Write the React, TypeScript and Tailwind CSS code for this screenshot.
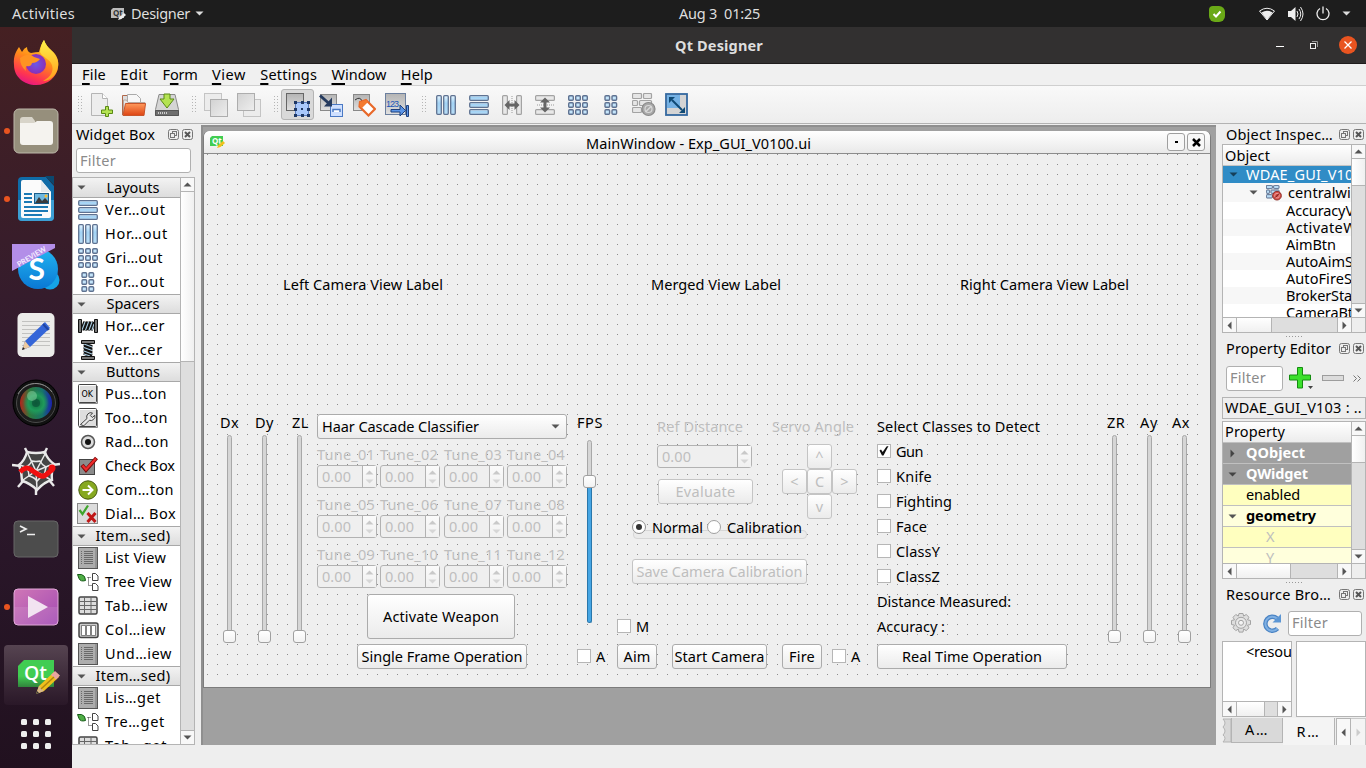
import React, { useLayoutEffect, useRef } from 'react';

/* Label that spreads its letters over a fixed advance width. */
function T({ w, children, className = '' }: { w?: number; children: React.ReactNode; className?: string }) {
  const ref = useRef<HTMLSpanElement>(null);
  useLayoutEffect(() => {
    const el = ref.current;
    if (!el || !w) return;
    el.style.letterSpacing = '0px';
    const n = (el.textContent || '').length || 1;
    el.style.letterSpacing = (w - el.getBoundingClientRect().width) / n + 'px';
  }, [w, children]);
  return <span ref={ref} className={'inline-block shrink-0 whitespace-pre pb-[2px] leading-[16px] ' + className}>{children}</span>;
}

/* ---------- small shared icons ---------- */
const Tri = ({ d = 'down', c = '#555' }: { d?: string; c?: string }) => (
  <svg width="9" height="9" viewBox="0 0 9 9" className="shrink-0">
    <path fill={c} d={d === 'down' ? 'M0.5 2.5h8l-4 4z' : d === 'up' ? 'M0.5 6.5h8l-4-4z' : d === 'left' ? 'M6.5 0.5v8l-4-4z' : 'M2.5 0.5v8l4-4z'} />
  </svg>
);

const DockButtons = () => (
  <svg width="26" height="12" viewBox="0 0 26 12" fill="none" stroke="#777" className="shrink-0">
    <rect x="0.5" y="0.5" width="10" height="10" rx="2" />
    <rect x="4.5" y="2.5" width="4" height="4" /><rect x="2.5" y="4.5" width="4" height="4" fill="#eee" />
    <rect x="14.5" y="0.5" width="10" height="10" rx="2" />
    <path d="M17 3l5 5M22 3l-5 5" strokeWidth="2" stroke="#555" />
  </svg>
);

const Grip = () => (
  <svg width="4" height="18" viewBox="0 0 4 18" fill="#b5b5b5">
    {[0, 3, 6, 9, 12, 15].map(y => <g key={y}><rect y={y} width="1" height="1" /><rect x="3" y={y} width="1" height="1" /></g>)}
  </svg>
);

const HDots = () => (
  <svg width="17" height="1" viewBox="0 0 17 1" fill="#999">{[0, 3, 6, 9, 12, 15].map(x => <rect key={x} x={x} width="1" height="1" />)}</svg>
);

const Defs = () => (
  <svg width="0" height="0" className="absolute">
    <defs>
      <linearGradient id="bl" x1="0" y1="0" x2="0" y2="1"><stop offset="0" stopColor="#e6f5ff" /><stop offset="0.4" stopColor="#a3d3f5" /><stop offset="1" stopColor="#b8ddf6" /></linearGradient>
      <linearGradient id="sq" x1="0" y1="0" x2="1" y2="1"><stop offset="0" stopColor="#d2d2d2" /><stop offset="1" stopColor="#eeeeee" /></linearGradient>
      <linearGradient id="dg" x1="0" y1="0" x2="0" y2="1"><stop offset="0" stopColor="#b4b4b4" /><stop offset="1" stopColor="#e0e0e0" /></linearGradient>
      <linearGradient id="or" x1="0" y1="0" x2="0" y2="1"><stop offset="0" stopColor="#ff9a5c" /><stop offset="1" stopColor="#dd4413" /></linearGradient>
      <linearGradient id="ff" x1="0.7" y1="0" x2="0.3" y2="1"><stop offset="0" stopColor="#ffe226" /><stop offset="0.45" stopColor="#ff8a1a" /><stop offset="0.8" stopColor="#ff3550" /><stop offset="1" stopColor="#e31587" /></linearGradient>
      <linearGradient id="fy" x1="0" y1="0" x2="0" y2="1"><stop offset="0" stopColor="#fff24a" /><stop offset="1" stopColor="#ff9c1c" /></linearGradient>
      <radialGradient id="fp"><stop offset="0" stopColor="#6b57e8" /><stop offset="1" stopColor="#8a2fb8" /></radialGradient>
      <linearGradient id="pk" x1="0" y1="0" x2="1" y2="1"><stop offset="0" stopColor="#d077b6" /><stop offset="1" stopColor="#a24ab4" /></linearGradient>
      <linearGradient id="lens" x1="0" y1="0" x2="1" y2="0"><stop offset="0" stopColor="#b3241c" /><stop offset="0.3" stopColor="#2d7a3c" /><stop offset="0.7" stopColor="#17746a" /><stop offset="1" stopColor="#1b1fae" /></linearGradient>
      <radialGradient id="glass"><stop offset="0" stopColor="#0f6b3c" /><stop offset="0.6" stopColor="#1f9a5a" /><stop offset="1" stopColor="#1f9a5a" stopOpacity="0" /></radialGradient>
      <linearGradient id="sk" x1="0" y1="0" x2="0" y2="1"><stop offset="0" stopColor="#22b4f0" /><stop offset="1" stopColor="#0a78d4" /></linearGradient>
      <linearGradient id="qt" x1="0" y1="0" x2="0" y2="1"><stop offset="0" stopColor="#41cd52" /><stop offset="0.6" stopColor="#41cd52" /><stop offset="1" stopColor="#31833c" /></linearGradient>
    </defs>
  </svg>
);

/* ---------- layout glyphs ---------- */
type G = { gray?: boolean };
const barFill = (g?: boolean) => (g ? '#e6e6e6' : '#b9dcf5');
const barLine = (g?: boolean) => (g ? '#a3a3a3' : '#5a6d8c');
const Cols = () => (
  <svg width="20" height="20" viewBox="0 0 20 20" fill="url(#bl)" stroke="#5f7291" strokeWidth="1.3">
    {[0.7, 7.7, 14.7].map(x => <rect key={x} x={x} y="0.7" width="4.6" height="18.6" rx="1" />)}
  </svg>
);
const Rows = () => (
  <svg width="20" height="20" viewBox="0 0 20 20" fill="url(#bl)" stroke="#5f7291" strokeWidth="1.3">
    {[0.7, 7.7, 14.7].map(y => <rect key={y} y={y} x="0.7" height="4.6" width="18.6" rx="1" />)}
  </svg>
);
const Cells = ({ n = 3 }: { n?: number }) => (
  <svg width="20" height="20" viewBox="0 0 20 20" fill="#c4e5fb" stroke="#5f7291" strokeWidth="1.4">
    {[0.7, 7.7, 14.7].map(y => (n === 3 ? [0.7, 7.7, 14.7] : [4, 11]).map(x => <rect key={x + '-' + y} x={x} y={y} width="4.6" height="4.6" rx="1" />))}
  </svg>
);
const Split = ({ v }: { v?: boolean }) => (
  <svg width="20" height="20" viewBox="0 0 20 20">
    <g transform={v ? 'rotate(90 10 10)' : ''}>
      <g fill="#e8e8e8" stroke="#a3a3a3" strokeWidth="1.2"><rect x="0.6" y="0.6" width="4.8" height="18.8" rx="1" /><rect x="14.6" y="0.6" width="4.8" height="18.8" rx="1" /></g>
      <path d="M10 1v18" stroke="#999" strokeDasharray="1 1" />
      <path d="M2.500 10l5-5v3.500h5V5l5 5-5 5v-3.500h-5V15z" fill="#666" />
    </g>
  </svg>
);
const Broken = ({ gray, s = 22 }: G & { s?: number }) => (
  <svg width={s} height={s} viewBox="0 0 24 24" fill={barFill(gray)} stroke={barLine(gray)} strokeWidth={gray ? 1.2 : 1.5}>
    <rect x="0.500" y="0.500" width="9" height="5" rx="1" /><rect x="11.500" y="0.500" width="8" height="5" rx="1" />
    <rect x="0.500" y="7.500" width="5" height="5" rx="1" /><rect x="7.500" y="7.500" width="12" height="5" rx="1" />
    <rect x="0.500" y="14.500" width="9" height="5" rx="1" />
    <circle cx="16.500" cy="16" r="6.500" fill={gray ? '#a8a8a8' : '#d9534a'} stroke={gray ? '#8a8a8a' : '#8d2f2b'} />
    <circle cx="16.500" cy="16" r="3.500" fill="none" stroke={gray ? '#d8d8d8' : '#e99'} /><path d="M13.500 19l6-6" stroke={gray ? '#d8d8d8' : '#5e1512'} strokeWidth="1.500" />
  </svg>
);
const Sq = ({ front }: { front?: boolean }) => (
  <svg width="24" height="24" viewBox="0 0 24 24" fill="url(#sq)" stroke="#adadad">
    {front ? <><rect x="6.500" y="6.500" width="17" height="17" fill="#ececec" stroke="#c4c4c4" /><rect x="0.500" y="0.500" width="17" height="17" /></>
      : <><rect x="0.500" y="0.500" width="17" height="17" fill="#ececec" stroke="#c4c4c4" /><rect x="6.500" y="6.500" width="17" height="17" /></>}
  </svg>
);

const NewI = () => (
  <svg width="24" height="24" viewBox="0 0 24 24">
    <path d="M2.500 0.500h11l5 5v17h-16z" fill="#ededed" stroke="#b4b4b4" /><path d="M13.500 0.500v5h5" fill="#fff" stroke="#b4b4b4" />
    <path d="M16.500 13.500h3v3.500h4v3.500h-4v3h-3v-3h-4v-3.500h4z" fill="#b4e352" stroke="#5a8a15" />
  </svg>
);
const OpenI = () => (
  <svg width="24" height="24" viewBox="0 0 24 24">
    <path d="M0.500 22V2.500h5l2 3" fill="#ddd" stroke="#b0684a" /><path d="M5.500 1.500h9l4 4v7h-13z" fill="#f7f7f7" stroke="#aaa" />
    <path d="M1.500 21V7h3l1.500 2.500h17v3" fill="#e6e6e6" stroke="#b7a79e" />
    <path d="M3.500 10.500h20l-1.500 12H1z" fill="url(#or)" stroke="#c9552a" />
  </svg>
);
const SaveI = () => (
  <svg width="24" height="24" viewBox="0 0 24 24">
    <path d="M4 1.500h16l3.500 15v6h-23v-6z" fill="#d5d5d5" stroke="#8a8a8a" /><path d="M0.500 17.500h23v5h-23z" fill="#6e6e6e" stroke="#555" /><path d="M3 20h9" stroke="#ccc" strokeWidth="2" strokeDasharray="1 1" />
    <path d="M9 1h6v5h4l-7 9-7-9h4z" fill="#b4e352" stroke="#5a8a15" />
  </svg>
);
const EditWidgets = () => (
  <svg width="24" height="24" viewBox="0 0 24 24">
    <rect x="0.500" y="0.500" width="17" height="17" fill="url(#dg)" stroke="#666" />
    <rect x="9.500" y="9.500" width="13" height="13" fill="#a9c8fb" stroke="#5a7cc0" />
    <g fill="#1f3864">{[8, 15, 21].map(x => [8, 15, 21].map(y => <rect key={x + '_' + y} x={x} y={y} width={x === 15 && y === 15 ? 2 : 3} height={x === 15 && y === 15 ? 2 : 3} />))}</g>
  </svg>
);
const Signals = () => (
  <svg width="24" height="24" viewBox="0 0 24 24">
    <rect x="1.500" y="1.500" width="16" height="16" fill="url(#dg)" stroke="#888" />
    <rect x="11.500" y="11.500" width="12" height="12" fill="#cfe0ff" stroke="#4a79c4" /><path d="M14 19v-2.500h7V19" stroke="#4a79c4" strokeWidth="1.500" fill="#fff" />
    <path d="M1 2.500l9 8" stroke="#253a5e" strokeWidth="3" /><path d="M13 13.500V4.500L5 13.500z" fill="#253a5e" />
  </svg>
);
const Buddies = () => (
  <svg width="24" height="24" viewBox="0 0 24 24">
    <rect x="1.500" y="1.500" width="16" height="16" fill="url(#dg)" stroke="#888" /><path d="M3 7q5-4 7 1" fill="none" stroke="#333" />
    <path d="M8 9l6-2 9 9-6.500 6.500-9-9z" fill="#fff" stroke="#e8692a" strokeWidth="2.200" /><path d="M8 9l6-2 2 2-6 6-2.500-2z" fill="#f47a30" />
  </svg>
);
const TabOrder = () => (
  <svg width="24" height="24" viewBox="0 0 24 24">
    <rect x="0.500" y="0.500" width="20" height="21" fill="url(#dg)" stroke="#6b7f9e" />
    <text x="1" y="14" fontSize="9" fontFamily="Liberation Sans" textLength="13" fill="#1c55b8">123</text>
    <path d="M6 16.500h9V12l5.500 5.500-5.500 5.500v-4H6zM21.500 12.500h2v11h-2z" fill="#5b95e6" stroke="#1d3f7d" />
  </svg>
);
const Adjust = () => (
  <svg width="24" height="24" viewBox="0 0 24 24">
    <rect x="1" y="1" width="21" height="21" fill="#d4d4d4" stroke="#33689f" strokeWidth="1.800" /><rect x="2" y="2" width="13" height="13" fill="#74b1e4" />
    <path d="M7 7l10 10" stroke="#0f4a75" strokeWidth="2" /><path d="M4 4h6l-6 6zM20 20v-6l-6 6z" fill="#0f4a75" />
  </svg>
);

/* ---------- widget list icons ---------- */
const Spring = ({ v }: { v?: boolean }) => (
  <svg width="20" height="20" viewBox="0 0 20 20">
    <g transform={v ? 'rotate(90 10 10)' : ''}>
      <path d="M4 14l3-8v8l3-8v8l3-8v8l3-8" fill="none" stroke="#111" strokeWidth="3.600" /><path d="M4 14l3-8M7.500 14l3-8M11 14l3-8M14 14l2-6" fill="none" stroke="#a9cbe0" strokeWidth="1.100" />
      <path d="M0.500 3.500h3v13h-3zM16.500 3.500h3v13h-3z" fill="#777" stroke="#111" />
    </g>
  </svg>
);
const Box = ({ children }: { children?: React.ReactNode }) => (
  <svg width="20" height="20" viewBox="0 0 20 20"><rect x="0.500" y="0.500" width="18" height="18" rx="1" fill="#dedede" stroke="#444" /><path d="M1.500 17.500v-16h16" fill="none" stroke="#fff" /><path d="M1 19.500h18.500V2" fill="none" stroke="#888" />{children}</svg>
);
const OkI = () => <Box><text x="3.500" y="12.500" fontSize="8" fontFamily="DejaVu Sans" textLength="11.500" lengthAdjust="spacingAndGlyphs" fill="#000">OK</text></Box>;
const ToolI = () => <Box><path d="M2.500 16.500L9 10.500a4.200 4.200 0 0 1 5.500-5.500l-2.200 2.500 2 2 2.500-2.200a4.200 4.200 0 0 1-5.500 5l-5.500 5.500z" fill="#e9e9e9" stroke="#444" /></Box>;
const RadioI = () => <svg width="20" height="20" viewBox="0 0 20 20"><circle cx="10" cy="10" r="6.500" fill="#ddd" stroke="#555" strokeWidth="1.500" /><circle cx="10" cy="10" r="3" fill="#111" /></svg>;
const CheckI = () => (
  <svg width="20" height="20" viewBox="0 0 20 20"><rect x="1.500" y="3.500" width="15" height="15" fill="#8b8b8b" stroke="#444" /><path d="M4 9l4 5L18.500 2" fill="none" stroke="#7d0b0b" strokeWidth="4" /><path d="M4.500 9.500l3.500 4L18 2.500" fill="none" stroke="#ee2a2a" strokeWidth="2.200" /></svg>
);
const CommandI = () => (
  <svg width="20" height="20" viewBox="0 0 20 20"><circle cx="10" cy="10" r="9.200" fill="#86a820" stroke="#46590e" /><path d="M4.500 10H14M10 5.500l4.500 4.500-4.500 4.500" fill="none" stroke="#fff" strokeWidth="2" /></svg>
);
const DialogI = () => (
  <svg width="22" height="22" viewBox="0 0 22 22" className="shrink-0"><rect x="0.500" y="0.500" width="20" height="20" fill="#dcdcdc" stroke="#888" /><path d="M2.500 7l3 4L11 2.500" fill="none" stroke="#3fa52c" strokeWidth="2.200" /><path d="M10.500 10l8 9M18.500 10l-8 9" stroke="#c01818" strokeWidth="3" /></svg>
);
const ListI = () => (
  <svg width="20" height="22" viewBox="0 0 20 22" className="shrink-0"><rect x="0.500" y="0.500" width="19" height="21" fill="#adadad" stroke="#555" /><g stroke="#6a6a6a">{[4.5, 6.5, 8.5, 10.5, 12.5, 14.5, 16.5].map(y => <path key={y} d={`M3 ${y}h1M6 ${y}h9`} />)}</g><path d="M18 1v20" stroke="#7d7d7d" /></svg>
);
const TreeI = () => (
  <svg width="22" height="18" viewBox="0 0 22 18" className="shrink-0"><path d="M0.500 1.500h4q4 1 4 6-5 1.500-6.500-2z" fill="#4fae46" stroke="#165a17" /><path d="M10.500 4.500h4M11.500 4.500v8h3" stroke="#333" fill="none" strokeDasharray="1 1" /><path d="M15.500 0.500h3l2.500 2.500v4.500h-5.500zM15.500 10.500h3l2.500 2.500v4.500h-5.500z" fill="#fff" stroke="#444" /></svg>
);
const TableI = () => (
  <svg width="20" height="20" viewBox="0 0 20 20"><rect x="1" y="1" width="18" height="17" rx="1.500" fill="#ddd" stroke="#444" strokeWidth="1.500" /><path d="M1 5.500h18M1 9.500h18M1 13.500h18M6.500 1v17M13 1v17" stroke="#666" /></svg>
);
const ColumnI = () => (
  <svg width="21" height="17" viewBox="0 0 21 17" className="shrink-0"><rect x="1" y="1" width="19" height="14.500" rx="2" fill="#ccc" stroke="#444" strokeWidth="1.500" /><path d="M3.500 3.500h4v10h-4zM8.500 3.500h4v10h-4zM13.500 3.500h4v10h-4z" fill="#fff" stroke="#555" strokeWidth="0.700" /></svg>
);

const widgets: [string, number, [string, number, React.ReactNode][]][] = [
  ['Layouts', 53, [['Ver…out', 61, <Rows />], ['Hor…out', 63, <Cols />], ['Gri…out', 58, <Cells />], ['For…out', 60, <Cells n={2} />]]],
  ['Spacers', 53, [['Hor…cer', 60, <Spring />], ['Ver…cer', 58, <Spring v />]]],
  ['Buttons', 54, [['Pus…ton', 62, <OkI />], ['Too…ton', 63, <ToolI />], ['Rad…ton', 64, <RadioI />], ['Check Box', 70, <CheckI />], ['Com…ton', 69, <CommandI />], ['Dial… Box', 71, <DialogI />]]],
  ['Item…sed)', 75, [['List View', 61, <ListI />], ['Tree View', 67, <TreeI />], ['Tab…iew', 63, <TableI />], ['Col…iew', 61, <ColumnI />], ['Und…iew', 67, <ListI />]]],
  ['Item…sed)', 75, [['Lis…get', 56, <ListI />], ['Tre…get', 60, <TreeI />], ['Tab…get', 62, <TableI />]]],
];

const Input = ({ className = '', w = 36 }: { className?: string; w?: number }) => (
  <div className={'flex h-[25px] items-center rounded-[3px] border border-[#b0b0b0] bg-white pl-[3px] text-[#8b8b8b] ' + className}><T w={w}>Filter</T></div>
);

/* ---------- scroll bars ---------- */
const VScroll = ({ thumb }: { thumb: string }) => (
  <div className="flex w-[14px] shrink-0 flex-col border-l border-[#b4b4b4] bg-[#dedede]">
    <div className="flex h-[14px] shrink-0 items-center justify-center border-b border-[#b4b4b4] bg-[#f8f8f8]"><Tri d="up" /></div>
    <div className={'shrink-0 border-b border-[#b4b4b4] bg-gradient-to-r from-white to-[#f0f0f0] ' + thumb} />
    <div className="flex-1" />
    <div className="flex h-[14px] shrink-0 items-center justify-center border-t border-[#b4b4b4] bg-[#f8f8f8]"><Tri /></div>
  </div>
);
const HScroll = ({ thumb, corner }: { thumb: string; corner?: boolean }) => (
  <div className="flex h-[15px] shrink-0 border-t border-[#b4b4b4] bg-[#dedede]">
    <div className="flex w-[14px] shrink-0 items-center justify-center border-r border-[#b4b4b4] bg-[#f8f8f8]"><Tri d="left" /></div>
    <div className={'shrink-0 border-r border-[#b4b4b4] bg-gradient-to-b from-white to-[#f0f0f0] ' + thumb} />
    <div className="flex-1" />
    <div className="flex w-[14px] shrink-0 items-center justify-center border-l border-[#b4b4b4] bg-[#f8f8f8]"><Tri d="right" /></div>
    {corner && <div className="w-[14px] shrink-0 border-l border-[#b4b4b4] bg-[#eee]" />}
  </div>
);

/* ---------- launcher ---------- */
const Firefox = () => (
  <svg width="48" height="48" viewBox="0 0 48 48">
    <path d="M2 26C1 16 5 11 7 8l3 5q2-4 5-5 0 5 4 6 5-1 8-1 2-8 5-12 2 6 8 11c5 4 7 10 6 16-1 10-10 18-22 18S2 38 2 26z" fill="url(#ff)" />
    <path d="M28 13q1-8 4-12 2 6 8 11c5 5 7 11 6 16-1 8-8 14-15 14 8-4 12-11 8-18-3-5-9-6-11-11z" fill="url(#fy)" />
    <circle cx="24" cy="25" r="10" fill="url(#fp)" /><path d="M8 19q9-6 14-1l6 2q-3 4-8 4-1 4-5 3-2 0-1 5-6-5-6-13z" fill="#ff9322" />
  </svg>
);
const Files = () => (
  <svg width="46" height="46" viewBox="0 0 46 46"><rect x="1" y="1" width="44" height="44" rx="5" fill="#968f7c" stroke="#bdb8aa" /><path d="M7 12q0-3 3-3h9l3 4v6H7z" fill="#d8d4c9" /><path d="M7 15h14l3-2h13q3 0 3 3v18q0 3-3 3H10q-3 0-3-3z" fill="#f5f3ef" /></svg>
);
const Writer = () => (
  <svg width="38" height="46" viewBox="0 0 38 46"><path d="M5 1h24l8 9v31q0 4-4 4H5q-4 0-4-4V5q0-4 4-4z" fill="#0f6ca8" /><path d="M1 24h36v17q0 4-4 4H5q-4 0-4-4z" fill="#3c9fd4" /><path d="M28 0h9v9z" fill="#0b486f" /><path d="M6 4h18l10 12v24q0 2-2 2H6q-2 0-2-2V6q0-2 2-2z" fill="#fbfbfb" /><path d="M24 4v12h10z" fill="#e4eaee" />
    <g stroke="#1b7ab5" strokeWidth="2"><path d="M7 18h8M7 22h8M7 26h8M7 31h24M7 35h24M7 39h18" /></g><rect x="17" y="17" width="15" height="11" fill="#1b5e8a" /><path d="M18 18h13v9H18z" fill="#6eb8e0" /><path d="M18 27l4-6 3 4 3-3 3 3v2z" fill="#3b3b3b" /><circle cx="29" cy="20" r="1.500" fill="#ffbc2b" /></svg>
);
const Skype = () => (
  <svg width="48" height="48" viewBox="0 0 48 48"><circle cx="38" cy="37" r="9.500" fill="#15a3e6" /><circle cx="26" cy="26" r="20" fill="url(#sk)" /><text x="16.500" y="37" fontSize="30" fontWeight="bold" fontFamily="Lato" fill="#fff">S</text><path d="M0 1h43v4L0 28z" fill="#b38ee8" /><text x="7" y="24" fontSize="7.300" fontWeight="bold" fontFamily="Lato" fill="#f3ecff" transform="rotate(-31 7 24)">PREVIEW</text></svg>
);
const Gedit = () => (
  <svg width="38" height="46" viewBox="0 0 38 46"><rect x="0.500" y="1" width="37" height="44" rx="5" fill="#ececea" /><g stroke="#c2c2c0"><path d="M5 9.500h28M5 13.500h28M5 17.500h28M5 21.500h28M5 25.500h28M5 29.500h28M5 33.500h28" /></g><path d="M5 38l3-9 20-19 5 6-20 19z" fill="#3465d8" /><path d="M5 38l3-9 5 6z" fill="#ecc9a0" /><path d="M5 38l1-3 2 2z" fill="#222" /><path d="M26 12l5.500 6" stroke="#1f45a3" strokeWidth="2" /></svg>
);
const Camera = () => (
  <svg width="48" height="48" viewBox="0 0 48 48"><circle cx="24" cy="24" r="23" fill="#111" stroke="#000" /><circle cx="24" cy="24" r="19.500" fill="#1c1c1c" stroke="#4a4a4a" /><circle cx="24" cy="24" r="16" fill="url(#lens)" /><circle cx="24" cy="24" r="13" fill="url(#glass)" /><circle cx="24" cy="24" r="4" fill="#0b5038" opacity="0.700" /><circle cx="20" cy="17" r="5" fill="#9bdcae" opacity="0.450" /><path d="M6 15A20 20 0 0 1 40 13" fill="none" stroke="#8a8a8a" /></svg>
);
const Spider = () => (
  <svg width="48" height="48" viewBox="0 0 48 48"><path d="M15 5h18l9 12-2 16-15 9-15-8-3-16z" fill="#454545" /><g stroke="#e9e9e9" strokeWidth="2.400" fill="none"><path d="M15 5q9 2 18 0 2 7 9 12-3 8-2 16-8 2-15 10-7-7-15-9 0-8-3-16 6-5 8-13z" /><path d="M13 1l3 6M35 1l-3 6M0 18l9 1M48 17l-8 1M6 40l6-7M42 39l-5-6M24 48v-7" /></g><g stroke="#e9e9e9" strokeWidth="1.500" fill="none"><path d="M16 7l8 17 9-17M8 18l16 6 17-7M11 33l13-9 15 9M24 24l1 18" /><path d="M20 14q4 1 8 0 2 4 6 6-1 5-2 9-4 1-7 5-3-4-8-5 0-5-3-9 4-2 6-6z" /></g><path d="M8 25q6-6 10-3t9 6 9-2l5-4" fill="none" stroke="#f01010" strokeWidth="5" /><circle cx="40" cy="21" r="3.500" fill="#f01010" /></svg>
);
const Terminal = () => (
  <svg width="46" height="38" viewBox="0 0 46 38"><rect x="1" y="1" width="44" height="36" rx="4" fill="#4c4c4c" stroke="#676767" /><path d="M7 6l6 3-6 3M14 14.500h8" stroke="#eee" strokeWidth="1.700" fill="none" /></svg>
);
const Video = () => (
  <svg width="46" height="38" viewBox="0 0 46 38"><rect x="1" y="1" width="44" height="36" rx="4" fill="url(#pk)" stroke="#e3a9d9" /><path d="M1.500 19h43v14q0 3.500-3.500 3.500H5Q1.500 36.500 1.500 33z" fill="#fff" opacity="0.100" /><path d="M15 8l20 11-20 11z" fill="#f2e3f1" /></svg>
);
const QtDock = () => (
  <svg width="42" height="36" viewBox="0 0 42 36" className="ml-[5px] mt-[5px]"><path d="M6 0h30v27H0V6z" fill="url(#qt)" /><text x="6" y="20" fontSize="20" fontFamily="Open Sans" fontWeight="600" fill="#fff" textLength="23" lengthAdjust="spacingAndGlyphs">Qt</text><path d="M18 34l3-8 15-14 5 5-15 14z" fill="#f0c01c" /><path d="M18 34l3-8 5 5z" fill="#d8b98a" /><path d="M18 34l1-3 2 2z" fill="#333" /><path d="M33 15l4-4 5 4.500-4 4z" fill="#e7a6a0" /><path d="M23 29l13-12" stroke="#b08610" strokeWidth="1.500" /></svg>
);
const Apps = () => (
  <svg width="30" height="30" viewBox="0 0 30 30" fill="#eee">{[0, 12, 24].map(x => [0, 12, 24].map(y => <rect key={x + '.' + y} x={x} y={y} width="6" height="6" rx="1.500" />))}</svg>
);
const dock: [React.ReactNode, boolean, boolean][] = [
  [<Firefox />, false, false], [<Files />, true, false], [<Writer />, true, false], [<Skype />, false, false], [<Gedit />, false, false], [<Camera />, false, false],
  [<Spider />, false, false], [<Terminal />, false, false], [<Video />, true, false], [<QtDock />, true, true], [<Apps />, false, false],
];

const QtSmall = ({ gray }: G) => (
  <svg width="15" height="12" viewBox="0 0 15 12"><path d="M2 0h11v10H0V2z" fill={gray ? '#bbb' : '#41cd52'} /><text x="2" y="8" fontSize="8" fontFamily="Open Sans" fontWeight="bold" fill={gray ? '#333' : '#fff'}>Qt</text><path d="M7 12l1.500-3L13 5l2 2-4.500 4z" fill={gray ? '#eee' : '#f0c01c'} /></svg>
);

/* ---------- form widgets ---------- */
const at = 'absolute ';
const Lbl = ({ c, w, off, children }: { c: string; w: number; off?: boolean; children: string }) => (
  <div className={at + 'flex h-5 items-center ' + (off ? 'text-[#bebebe] ' : '') + c}><T w={w}>{children}</T></div>
);
const Btn = ({ c, w, off, children }: { c: string; w?: number; off?: boolean; children: string }) => (
  <div className={at + 'flex items-center justify-center rounded-[3px] border bg-gradient-to-b from-white to-[#ebebeb] ' + (off ? 'border-[#c4c4c4] text-[#bebebe] ' : 'border-[#ababab] ') + c}><T w={w}>{children}</T></div>
);
const Spin = ({ c, wide }: { c: string; wide?: boolean }) => (
  <div className={at + 'flex h-[23px] rounded-[3px] border border-[#b2b2b2] bg-[#efefef] text-[#bebebe] ' + (wide ? 'w-[95px] ' : 'w-[60px] ') + c}>
    <div className="flex flex-1 items-center pl-1"><T w={29}>0.00</T></div>
    <div className="flex w-[14px] flex-col items-center justify-center border-l border-[#b2b2b2] bg-gradient-to-b from-[#fbfbfb] to-[#f0f0f0]">
      <Tri d="up" c="#c9c9c9" /><Tri c="#d6d6d6" />
    </div>
  </div>
);
const Chk = ({ c, w, on, children }: { c: string; w: number; on?: boolean; children: string }) => (
  <div className={at + 'flex h-5 items-center gap-[5px] ' + c}>
    <span className="mb-[2px] flex size-[14px] items-center justify-center border border-[#b6b6b6] bg-white">
      {on && <svg width="10" height="10" viewBox="0 0 10 10"><path d="M0.500 4.500l1.500-1 1.700 2.500L7.500.5 9.500 0 4.500 9.500H3z" fill="#111" /></svg>}
    </span>
    <T w={w}>{children}</T>
  </div>
);
const Slider = ({ c }: { c: string }) => (
  <div className={at + 'flex h-[208px] w-[13px] flex-col items-center ' + c}>
    <div className="h-[196px] w-[5px] shrink-0 rounded-t-sm border border-[#a8a8a8] bg-[#d6d6d6]" />
    <div className="-mt-px size-[13px] shrink-0 rounded-[3px] border border-[#a0a0a0] bg-gradient-to-b from-white to-[#f2f2f2]" />
  </div>
);

const Form = () => (
  <div className="relative h-[530px] w-[1000px] shrink-0">
    <svg width="1000" height="530" className="absolute left-0 top-0">
      <defs><pattern id="dots" width="10" height="10" patternUnits="userSpaceOnUse"><rect width="1" height="1" fill="#8c8c8c" /></pattern></defs>
      <rect width="1000" height="530" fill="url(#dots)" />
    </svg>
    <Lbl c="left-[76px] top-[121px]" w={160}>Left Camera View Label</Lbl>
    <Lbl c="left-[444px] top-[121px]" w={130}>Merged View Label</Lbl>
    <Lbl c="left-[753px] top-[121px]" w={169}>Right Camera View Label</Lbl>

    <Lbl c="left-[13px] top-[259px]" w={19}>Dx</Lbl>
    <Lbl c="left-[48px] top-[259px]" w={19}>Dy</Lbl>
    <Lbl c="left-[85px] top-[259px]" w={17}>ZL</Lbl>
    <Slider c="left-[16px] top-[281px]" /><Slider c="left-[51px] top-[281px]" /><Slider c="left-[86px] top-[281px]" />

    <div className="absolute left-[110px] top-[260px] flex h-[25px] w-[250px] items-center justify-between rounded-[3px] border border-[#ababab] bg-gradient-to-b from-white to-[#ebebeb] pl-1 pr-[6px]">
      <T w={157}>Haar Cascade Classifier</T><Tri />
    </div>

    <Lbl off c="left-[110px] top-[291px]" w={58}>Tune_01</Lbl><Lbl off c="left-[173px] top-[291px]" w={58}>Tune_02</Lbl><Lbl off c="left-[237px] top-[291px]" w={58}>Tune_03</Lbl><Lbl off c="left-[300px] top-[291px]" w={58}>Tune_04</Lbl>
    <Spin c="left-[110px] top-[311px]" /><Spin c="left-[173px] top-[311px]" /><Spin c="left-[237px] top-[311px]" /><Spin c="left-[300px] top-[311px]" />
    <Lbl off c="left-[110px] top-[341px]" w={58}>Tune_05</Lbl><Lbl off c="left-[173px] top-[341px]" w={58}>Tune_06</Lbl><Lbl off c="left-[237px] top-[341px]" w={58}>Tune_07</Lbl><Lbl off c="left-[300px] top-[341px]" w={58}>Tune_08</Lbl>
    <Spin c="left-[110px] top-[361px]" /><Spin c="left-[173px] top-[361px]" /><Spin c="left-[237px] top-[361px]" /><Spin c="left-[300px] top-[361px]" />
    <Lbl off c="left-[110px] top-[391px]" w={58}>Tune_09</Lbl><Lbl off c="left-[173px] top-[391px]" w={58}>Tune_10</Lbl><Lbl off c="left-[237px] top-[391px]" w={58}>Tune_11</Lbl><Lbl off c="left-[300px] top-[391px]" w={58}>Tune_12</Lbl>
    <Spin c="left-[110px] top-[411px]" /><Spin c="left-[173px] top-[411px]" /><Spin c="left-[237px] top-[411px]" /><Spin c="left-[300px] top-[411px]" />

    <Btn c="left-[160px] top-[440px] h-[45px] w-[148px]" w={116}>Activate Weapon</Btn>
    <Btn c="left-[150px] top-[490px] h-[25px] w-[170px]" w={161}>Single Frame Operation</Btn>

    <Lbl c="left-[370px] top-[259px]" w={26}>FPS</Lbl>
    <div className="absolute left-[376px] top-[286px] flex h-[183px] w-[13px] flex-col items-center">
      <div className="h-[36px] w-[5px] shrink-0 rounded-t-sm border border-[#a8a8a8] bg-[#d6d6d6]" />
      <div className="-mt-px size-[13px] shrink-0 rounded-[3px] border border-[#a0a0a0] bg-gradient-to-b from-white to-[#f2f2f2]" />
      <div className="w-[5px] flex-1 rounded-b-sm border border-t-0 border-[#2a77ab] bg-[#46a6e4]" />
    </div>

    <Lbl off c="left-[450px] top-[263px]" w={86}>Ref Distance</Lbl>
    <Lbl off c="left-[565px] top-[263px]" w={82}>Servo Angle</Lbl>
    <Spin wide c="left-[450px] top-[291px]" />
    <Btn off c="left-[451px] top-[325px] h-[25px] w-[95px]" w={60}>Evaluate</Btn>
    <Btn off c="left-[600px] top-[290px] size-[25px]">^</Btn>
    <Btn off c="left-[575px] top-[315px] size-[25px]">{'<'}</Btn>
    <Btn off c="left-[600px] top-[315px] size-[25px]">C</Btn>
    <Btn off c="left-[625px] top-[315px] size-[25px]">{'>'}</Btn>
    <Btn off c="left-[600px] top-[340px] size-[25px]">v</Btn>

    <div className="absolute left-[426px] top-[376px] h-[9px] w-[174px] rounded-sm border border-[#d6d6d6] bg-[#ebebeb]" />
    <div className="absolute left-[425px] top-[364px] flex h-5 items-center">
      <span className="mb-[3px] flex size-[14px] items-center justify-center rounded-full border border-[#8f8f8f] bg-white"><span className="size-[6px] rounded-full bg-[#333]" /></span>
      <T w={51} className="ml-[6px]">Normal</T>
      <span className="mb-[3px] ml-[4px] size-[14px] rounded-full border border-[#a0a0a0] bg-white" />
      <T w={75} className="ml-[6px]">Calibration</T>
    </div>
    <Btn off c="left-[425px] top-[405px] h-[25px] w-[175px]" w={166}>Save Camera Calibration</Btn>

    <Chk c="left-[410px] top-[463px]" w={13}>M</Chk>
    <Chk c="left-[370px] top-[493px]" w={10}>A</Chk>
    <Btn c="left-[410px] top-[490px] h-[25px] w-[40px]" w={27}>Aim</Btn>
    <Btn c="left-[465px] top-[490px] h-[25px] w-[95px]" w={90}>Start Camera</Btn>
    <Btn c="left-[575px] top-[490px] h-[25px] w-[40px]" w={26}>Fire</Btn>
    <Chk c="left-[625px] top-[493px]" w={10}>A</Chk>

    <Lbl c="left-[670px] top-[263px]" w={163}>Select Classes to Detect</Lbl>
    <Chk on c="left-[670px] top-[288px]" w={27}>Gun</Chk>
    <Chk c="left-[670px] top-[313px]" w={36}>Knife</Chk>
    <Chk c="left-[670px] top-[338px]" w={56}>Fighting</Chk>
    <Chk c="left-[670px] top-[363px]" w={31}>Face</Chk>
    <Chk c="left-[670px] top-[388px]" w={44}>ClassY</Chk>
    <Chk c="left-[670px] top-[413px]" w={44}>ClassZ</Chk>
    <Lbl c="left-[670px] top-[438px]" w={134}>Distance Measured:</Lbl>
    <Lbl c="left-[670px] top-[463px]" w={68}>Accuracy :</Lbl>
    <Btn c="left-[670px] top-[490px] h-[25px] w-[190px]" w={140}>Real Time Operation</Btn>

    <Lbl c="left-[900px] top-[259px]" w={18}>ZR</Lbl>
    <Lbl c="left-[933px] top-[259px]" w={18}>Ay</Lbl>
    <Lbl c="left-[965px] top-[259px]" w={18}>Ax</Lbl>
    <Slider c="left-[901px] top-[281px]" /><Slider c="left-[936px] top-[281px]" /><Slider c="left-[971px] top-[281px]" />
  </div>
);

const menus: [React.ReactNode, number][] = [
  [<><u>F</u>ile</>, 24], [<><u>E</u>dit</>, 28], [<>F<u>o</u>rm</>, 35], [<><u>V</u>iew</>, 34], [<><u>S</u>ettings</>, 57], [<><u>W</u>indow</>, 55], [<><u>H</u>elp</>, 32],
];

const Tool = ({ on, children }: { on?: boolean; children: React.ReactNode }) => (
  <div className={'flex h-[31px] w-[33px] items-center justify-center ' + (on ? 'rounded-[3px] border border-[#b4b4b4] bg-[#d9d9d9]' : '')}>{children}</div>
);
const Sep = () => <div className="flex w-4 items-center justify-center pl-[6px]"><Grip /></div>;

const objects: [string, number][] = [['AccuracyV', 68], ['ActivateW', 71], ['AimBtn', 50], ['AutoAimS', 67], ['AutoFireS', 66], ['BrokerSta', 66], ['CameraBt', 67]];

export default function App() {
  return (
    <div className="flex h-[768px] w-[1366px] flex-col overflow-hidden bg-[#eeeeee] font-['Noto_Sans',sans-serif] text-[14.5px] leading-[18px] text-black">
      <Defs />
      {/* system bar */}
      <div className="flex h-[27px] shrink-0 items-center bg-[#1d1d1d] pl-3 text-[#dfdfdf]">
        <T w={63}>Activities</T>
        <div className="ml-[36px]"><QtSmall gray /></div>
        <T w={59} className="ml-[5px]">Designer</T>
        <div className="ml-[5px]"><Tri c="#ddd" /></div>
        <div className="flex w-[556px] justify-end"><T w={81}>Aug 3  01:25</T></div>
        <svg width="16" height="16" viewBox="0 0 16 16" className="ml-[449px]"><rect width="16" height="16" rx="6" fill="#6aa917" /><rect width="9" height="9" rx="4" fill="#6aa917" /><path d="M4.500 8l2.500 2.500 4.500-5" fill="none" stroke="#fff" strokeWidth="2" /></svg>
        <svg width="16" height="14" viewBox="0 0 16 14" className="ml-[34px]"><path d="M0.500 4Q8-1.500 15.500 4L8 13z" fill="none" stroke="#eee" /><path d="M2.500 5.500Q8 2 13.500 5.500L8 13z" fill="#eee" /></svg>
        <svg width="16" height="16" viewBox="0 0 16 16" className="ml-[13px]"><path d="M0 5h3L7.500 1v14L3 11H0z" fill="#eee" /><path d="M9 5q2 3 0 6M11 3q3.500 5 0 10M12.500 1q5 7 0 14" fill="none" stroke="#eee" /></svg>
        <svg width="14" height="15" viewBox="0 0 14 15" className="ml-[12px]"><path d="M4 2.500a6 6 0 1 0 6 0M7 0.500v7" fill="none" stroke="#eee" strokeWidth="1.300" /></svg>
        <div className="ml-[12px]"><Tri c="#ddd" /></div>
      </div>

      <div className="flex min-h-0 flex-1">
        {/* launcher */}
        <div className="flex w-[72px] shrink-0 flex-col overflow-hidden bg-gradient-to-b from-[#452022] via-[#2f1a2f] to-[#21111f] pt-[2px]">
          {dock.map(([icon, run, active], i) => (
            <div key={i} className="flex h-[68px] shrink-0 items-center last:h-[50px]">
              <div className="w-1 shrink-0">{run && <div className="ml-[4px] size-[6px] rounded-full bg-[#e95420]" />}</div>
              <div className={'flex h-[60px] w-[64px] shrink-0 items-center justify-center ' + (active ? 'rounded-[4px] bg-gradient-to-b from-[#564451] to-[#2a1828]' : '')}>{icon}</div>
            </div>
          ))}
        </div>

        <div className="flex min-w-0 flex-1 flex-col">
          {/* window title */}
          <div className="flex h-[37px] shrink-0 items-center border-b border-[#1f1c1c] bg-[#323030]">
            <div className="flex w-[1204px] items-center pl-[603px] pt-[2px]"><T w={88} className="font-bold text-[#dedede]">Qt Designer</T></div>
            <div className="mt-[3px] h-px w-2 bg-white" />
            <svg width="8" height="8" viewBox="0 0 8 8" className="ml-[26px]" fill="none" stroke="#eee"><path d="M2 .5h5.500V6" stroke="#999" /><rect x="0.500" y="2.500" width="5" height="5" /></svg>
            <svg width="18" height="18" viewBox="0 0 18 18" className="ml-[21px]"><circle cx="9" cy="9" r="9" fill="#e95420" /><path d="M5.500 5.500l7 7M12.500 5.500l-7 7" stroke="#fff" strokeWidth="1.300" /></svg>
          </div>
          {/* menu bar */}
          <div className="flex h-[22px] shrink-0 items-center gap-[14.300px] border-b border-[#cfcfcf] bg-[#f0f0f0] pl-[10px] [&_u]:decoration-[1.500px] [&_u]:underline-offset-[3px]">
            {menus.map(([m, w], i) => <T key={i} w={w}>{m}</T>)}
          </div>
          {/* tool bar */}
          <div className="flex h-[38px] shrink-0 items-center border-b border-[#b2b2b2] bg-gradient-to-b from-[#f9f9f9] to-[#ededed]">
            <div className="flex w-[12px] justify-center pl-1"><Grip /></div>
            <Tool><NewI /></Tool><Tool><OpenI /></Tool><Tool><SaveI /></Tool>
            <Sep />
            <Tool><Sq /></Tool><Tool><Sq front /></Tool>
            <Sep />
            <Tool on><EditWidgets /></Tool><Tool><Signals /></Tool><Tool><Buddies /></Tool><Tool><TabOrder /></Tool>
            <Sep />
            <Tool><Cols /></Tool><Tool><Rows /></Tool><Tool><Split /></Tool><Tool><Split v /></Tool><Tool><Cells /></Tool><Tool><Cells n={2} /></Tool><Tool><Broken gray s={24} /></Tool><Tool><Adjust /></Tool>
          </div>

          <div className="flex h-[621px] shrink-0 pt-px">
            {/* widget box */}
            <div className="flex w-[129px] shrink-0 flex-col">
              <div className="flex h-[20px] shrink-0 items-center justify-between pl-1 pr-[7px]"><T w={79}>Widget Box</T><DockButtons /></div>
              <Input className="ml-[4px] mt-[3px] w-[115px] shrink-0" w={36} />
              <div className="mt-[4px] flex min-h-0 w-[123px] flex-1 border border-[#b4b4b4] bg-white">
                <div className="min-w-0 flex-1 overflow-hidden">
                  {widgets.map(([title, tw, items], i) => (
                    <React.Fragment key={i}>
                      <div className="flex h-[20px] items-center border-b border-t border-[#a8a8a8] bg-gradient-to-b from-[#f3f3f3] to-[#dddddd] pl-[4px] first:border-t-0">
                        <Tri /><div className="flex flex-1 justify-center"><T w={tw}>{title}</T></div>
                      </div>
                      {items.map(([name, w, icon], j) => (
                        <div key={j} className="flex h-[24px] items-center">
                          <div className="flex w-[32px] shrink-0 items-center pl-[5px]"><div className="flex w-5 shrink-0 justify-center">{icon}</div></div><T w={w}>{name}</T>
                        </div>
                      ))}
                    </React.Fragment>
                  ))}
                </div>
                <VScroll thumb="h-[170px]" />
              </div>
            </div>

            {/* form area */}
            <div className="w-[1015px] shrink-0 border-l-2 border-t-2 border-[#8f8f8f] bg-[#a0a0a0] pt-[4px]">
              <div className="flex h-[557px] w-[1008px] flex-col rounded-t-[6px] border border-t-0 border-[#7c7c7c] bg-[#efefef]">
                <div className="flex h-[23px] shrink-0 items-center rounded-t-[6px] border-b border-[#8c8c8c] bg-gradient-to-b from-white to-[#e9e9e9] pl-[6px]">
                  <QtSmall />
                  <T w={225} className="ml-[361px] mt-[3px]">MainWindow - Exp_GUI_V0100.ui</T>
                  <div className="ml-[356px] flex h-[18px] w-[18px] items-center justify-center rounded-[3px] border border-[#9f9f9f] bg-[#f8f8f8]"><span className="h-[2px] w-[3px] bg-black" /></div>
                  <div className="ml-[2px] flex h-[18px] w-[18px] items-center justify-center rounded-[3px] border border-[#9f9f9f] bg-[#f8f8f8]"><svg width="9" height="9" viewBox="0 0 9 9"><path d="M1 1l7 7M8 1L1 8" stroke="#000" strokeWidth="2.500" /></svg></div>
                </div>
                <div className="pl-[3px]"><Form /></div>
              </div>
            </div>

            {/* right docks */}
            <div className="flex min-w-0 flex-1 flex-col overflow-hidden pl-[6px]">
              <div className="flex h-[19px] shrink-0 items-center pl-1"><T w={107}>Object Inspec…</T><div className="ml-[6px]"><DockButtons /></div></div>
              <div className="flex h-[189px] shrink-0 flex-col border border-[#b4b4b4] bg-white">
                <div className="flex min-h-0 flex-1">
                  <div className="min-w-0 flex-1 overflow-hidden">
                    <div className="flex h-[21px] items-center border-b border-[#c4c4c4] bg-gradient-to-b from-white to-[#ececec] pl-[2px] pt-px"><T w={45}>Object</T></div>
                    <div className="flex h-[17px] items-center bg-[#308cc6] pl-[6px] text-white"><Tri c="#153f59" /><T w={116} className="ml-[8px]">WDAE_GUI_V103</T></div>
                    <div className="flex h-[19px] items-center bg-[#f7f7f7] pl-[26px]"><Tri /><div className="ml-[8px] mr-[6px]"><Broken s={16} /></div><T w={81}>centralwidg</T></div>
                    {objects.map(([o, w], i) => <div key={o} className={'flex h-[17px] items-center pl-[63px] ' + (i % 2 ? 'bg-[#f7f7f7]' : '')}><T w={w}>{o}</T></div>)}
                  </div>
                  <VScroll thumb="h-[27px]" />
                </div>
                <HScroll corner thumb="w-[35px]" />
              </div>
              <div className="flex h-[6px] shrink-0 items-center justify-center"><HDots /></div>

              <div className="flex h-[20px] shrink-0 items-center pl-1"><T w={105}>Property Editor</T><div className="ml-[8px]"><DockButtons /></div></div>
              <div className="flex h-[38px] shrink-0 items-center pl-1">
                <Input className="w-[57px]" />
                <svg width="26" height="24" viewBox="0 0 26 24" className="ml-[6px]"><path d="M8.500 1.500h5v7.500h8v5h-8v8h-5v-8h-8v-5h8z" fill="#3be02c" stroke="#148c10" /><path d="M19 20h5l-2.500 3z" fill="#444" /></svg>
                <div className="ml-[7px] h-[6px] w-[22px] border border-[#9d9d9d] bg-[#dcdcdc]" />
                <svg width="8" height="7" viewBox="0 0 8 7" className="ml-[9px]" fill="none" stroke="#777"><path d="M0.500.5l3 3-3 3M4.500.5l3 3-3 3" /></svg>
              </div>
              <div className="flex h-[22px] shrink-0 items-center overflow-hidden border border-[#b4b4b4] pl-[2px]"><T w={137}>WDAE_GUI_V103 : ..</T></div>
              <div className="mt-[2px] flex h-[158px] shrink-0 flex-col border border-[#b4b4b4] bg-white">
                <div className="flex min-h-0 flex-1">
                  <div className="min-w-0 flex-1 overflow-hidden [&>div]:flex [&>div]:h-[21px] [&>div]:items-center [&>div]:border-b [&>div]:border-[#c0c0c0]">
                    <div className="bg-gradient-to-b from-white to-[#ececec] pl-[2px]"><T w={60}>Property</T></div>
                    <div className="bg-[#a0a0a0] pl-[5px] font-bold text-white"><Tri d="right" c="#444" /><T w={59} className="ml-[9px]">QObject</T></div>
                    <div className="bg-[#a0a0a0] pl-[5px] font-bold text-white"><Tri c="#444" /><T w={62} className="ml-[9px]">QWidget</T></div>
                    <div className="bg-[#ffffbf] pl-[23px]"><T w={54}>enabled</T></div>
                    <div className="bg-[#ffffdc] pl-[5px] font-bold text-black"><Tri /><T w={70} className="ml-[9px]">geometry</T></div>
                    <div className="bg-[#ffffbf] pl-[43px] text-[#bebebe]"><T>X</T></div>
                    <div className="bg-[#ffffdc] pl-[43px] text-[#bebebe]"><T>Y</T></div>
                  </div>
                  <VScroll thumb="h-[27px]" />
                </div>
                <HScroll corner thumb="w-[54px]" />
              </div>
              <div className="flex h-[6px] shrink-0 items-center justify-center"><HDots /></div>

              <div className="flex h-[20px] shrink-0 items-center pl-1"><T w={105}>Resource Bro…</T><div className="ml-[8px]"><DockButtons /></div></div>
              <div className="flex h-[36px] shrink-0 items-center pl-[8px]">
                <svg width="22" height="22" viewBox="0 0 22 22" fill="none" stroke="#a3a3a3"><path d="M9 .5h4l.6 2.600 2.600-1.600 2.800 2.800-1.500 2.500 3 .7v4l-3 .7 1.500 2.600-2.800 2.800-2.600-1.500-.6 3H9l-.7-3-2.500 1.500L3 14.800l1.500-2.600-3-.7v-4l3-.7L3 4.300l2.800-2.800 2.500 1.600z" transform="translate(0 1)" fill="#dedede" /><circle cx="11" cy="10.800" r="5.500" fill="#e8e8e8" /><circle cx="11" cy="10.800" r="2.500" fill="#f4f4f4" /></svg>
                <svg width="20" height="20" viewBox="0 0 20 20" className="ml-[10px]"><path d="M15.500 15.500a7 7 0 1 1-.5-10" fill="none" stroke="#4b84c4" strokeWidth="4.500" /><path d="M15.500 15.500a7 7 0 1 1-.5-10" fill="none" stroke="#7fb0e3" strokeWidth="2" /><path d="M19 1v8.500h-8.500z" fill="#5c96d4" /></svg>
                <Input className="ml-[6px] w-[74px]" w={36} />
              </div>
              <div className="flex h-[76px] shrink-0 gap-[4px]">
                <div className="flex w-[70px] shrink-0 flex-col overflow-hidden border border-[#b4b4b4] bg-white"><div className="flex-1 overflow-hidden pl-[23px]"><T w={58}>&lt;resourc</T></div><HScroll thumb="w-[28px]" /></div>
                <div className="flex-1 border border-[#b4b4b4] bg-white" />
              </div>
              <div className="mt-px flex h-[28px] shrink-0 items-start">
                <svg width="9" height="25" viewBox="0 0 9 25" className="shrink-0"><path d="M1 1q4 4 0 8 4 4 0 8 4 3 0 7h8V1z" fill="#d8d8d8" stroke="#b4b4b4" /></svg>
                <div className="flex h-[25px] w-[52px] shrink-0 items-center justify-center border border-t-0 border-[#b4b4b4] bg-[#d9d9d9]"><T w={24}>A…</T></div>
                <div className="flex h-[28px] w-[52px] shrink-0 items-center justify-center border border-l-0 border-t-0 border-[#b4b4b4] bg-[#f4f4f4]"><T w={24}>R…</T></div>
                <div className="ml-px flex h-[28px] w-[15px] shrink-0 items-center justify-center border border-[#b4b4b4] bg-[#f8f8f8]"><Tri d="left" /></div>
                <div className="flex h-[28px] w-[15px] shrink-0 items-center justify-center border border-l-0 border-[#c9c9c9] bg-[#f4f4f4]"><Tri d="right" c="#ccc" /></div>
              </div>
            </div>
          </div>
        </div>
      </div>
    </div>
  );
}
